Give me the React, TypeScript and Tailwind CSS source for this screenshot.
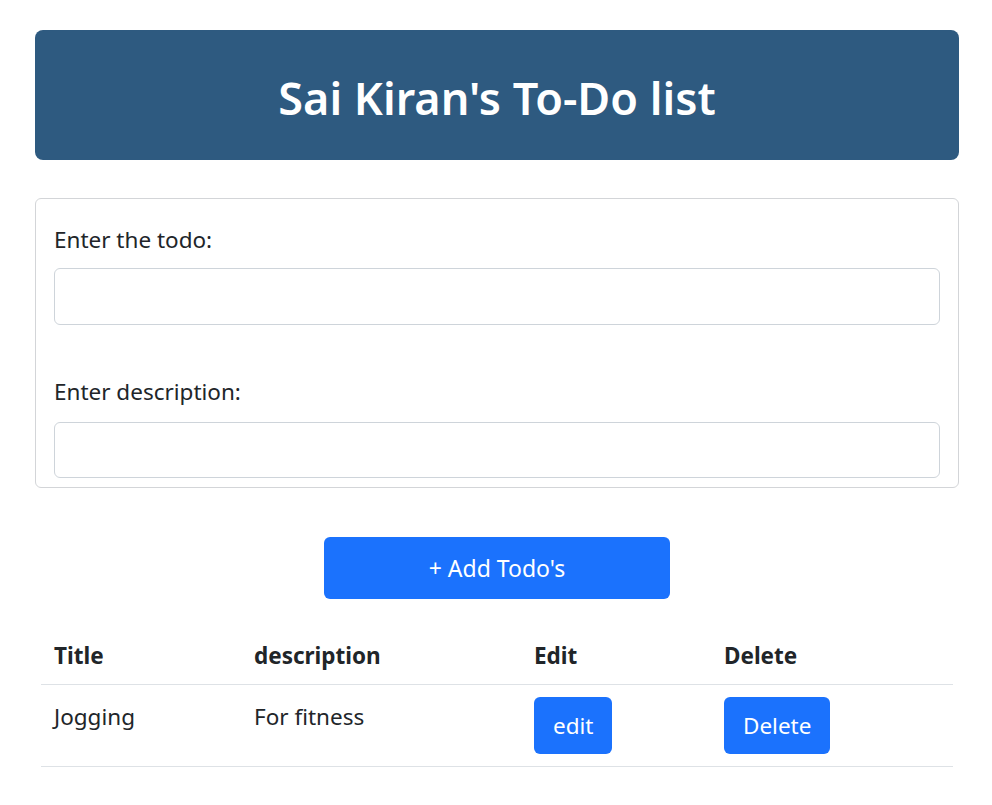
const todos = [{ title: 'Jogging', desc: 'For fitness' }];

export default function App() {
  return (
    <div className="bg-white min-h-screen pl-[35px] pr-[33px] pt-[30px] text-[#212529] font-['Noto_Sans',sans-serif]">
      {/* Header */}
      <div className="h-[130px] rounded-lg bg-[#2e5a80] flex items-center justify-center">
        <h1 className="text-white text-[45px] font-semibold leading-none pt-[4px]">Sai Kiran's To-Do list</h1>
      </div>

      {/* Form card */}
      <div className="mt-[38px] rounded-md border border-[#d3d5d8] px-[18px] pt-[26px] pb-[9px]">
        <label className="block text-[22.5px] leading-[30px]">Enter the todo:</label>
        <input className="mt-[13px] block w-full h-[57px] rounded-md border border-[#ced4da] outline-none" />
        <label className="block mt-[52px] text-[22.5px] leading-[30px]">Enter description:</label>
        <input className="mt-[15px] block w-full h-[56px] rounded-md border border-[#ced4da] outline-none" />
      </div>

      {/* Add button */}
      <div className="mt-[49px] flex justify-center">
        <button className="w-[346px] h-[62px] rounded-md bg-[#1b72fd] text-white text-[23px]">+ Add Todo's</button>
      </div>

      {/* Table */}
      <div className="mt-[30px] px-[6px]">
        <table className="w-full border-collapse text-[22.5px] leading-[30px]">
          <thead>
            <tr className="border-b border-[#dee2e6]">
              <th className="w-[200px] text-left font-bold px-[13px] pt-[12px] pb-[13px]">Title</th>
              <th className="w-[280px] text-left font-bold px-[13px] pt-[12px] pb-[13px]">description</th>
              <th className="w-[190px] text-left font-bold px-[13px] pt-[12px] pb-[13px]">Edit</th>
              <th className="text-left font-bold px-[13px] pt-[12px] pb-[13px]">Delete</th>
            </tr>
          </thead>
          <tbody>
            {todos.map(t => (
              <tr key={t.title} className="border-b border-[#dee2e6]">
                <td className="align-top px-[13px] pt-[17px] pb-[12px]">{t.title}</td>
                <td className="align-top px-[13px] pt-[17px] pb-[12px]">{t.desc}</td>
                <td className="align-top px-[13px] pt-[12px] pb-[12px]">
                  <button className="h-[57px] px-[19px] rounded-md bg-[#1b72fd] text-white">edit</button>
                </td>
                <td className="align-top px-[13px] pt-[12px] pb-[12px]">
                  <button className="h-[57px] px-[19px] rounded-md bg-[#1b72fd] text-white">Delete</button>
                </td>
              </tr>
            ))}
          </tbody>
        </table>
      </div>
    </div>
  );
}
